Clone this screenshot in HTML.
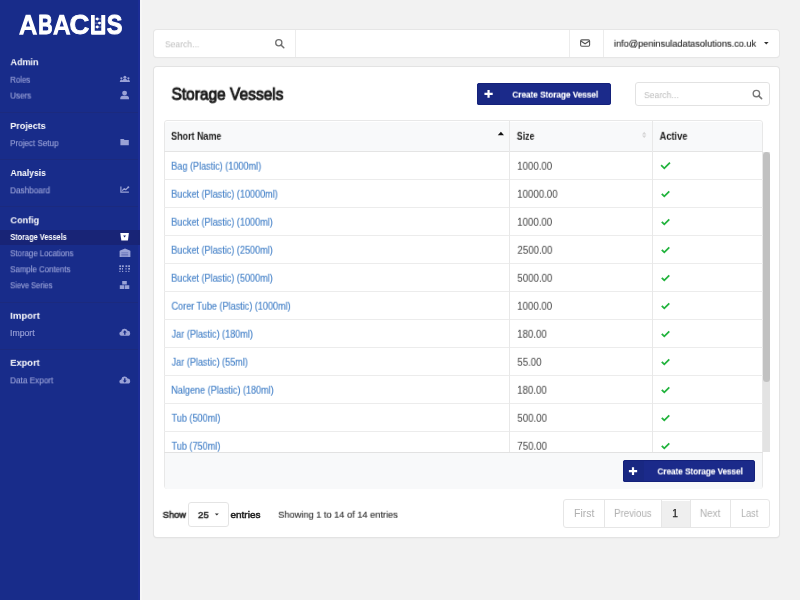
<!DOCTYPE html>
<html><head><meta charset="utf-8">
<style>
*{margin:0;padding:0;box-sizing:border-box}
html,body{width:800px;height:600px;overflow:hidden;background:#f2f2f2;font-family:"Liberation Sans",sans-serif}
.a{position:absolute}
.t{position:absolute;white-space:nowrap;line-height:1;transform-origin:0 0;will-change:transform;font-family:"Liberation Sans",sans-serif}
svg{position:absolute;overflow:visible}
</style></head><body>
<!-- sidebar -->
<div class="a" style="left:0;top:0;width:140px;height:600px;background:#182c8a"></div>
<div class="a" style="left:138px;top:0;width:2px;height:600px;background:#1c2d96"></div>
<div class="a" style="left:140px;top:0;width:2px;height:600px;background:#f6f6f6"></div>
<div class="a" style="left:0;top:112px;width:138px;height:1px;background:#1b2a7e"></div>
<div class="a" style="left:0;top:159px;width:138px;height:1px;background:#1b2a7e"></div>
<div class="a" style="left:0;top:206px;width:138px;height:1px;background:#1b2a7e"></div>
<div class="a" style="left:0;top:302px;width:138px;height:1px;background:#1b2a7e"></div>
<div class="a" style="left:0;top:349px;width:138px;height:1px;background:#1b2a7e"></div>
<div class="a" style="left:0;top:229.5px;width:140px;height:15.5px;background:#182476"></div>

<!-- logo -->
<svg width="140" height="50" style="left:0;top:0;will-change:transform" viewBox="0 0 140 50">
 <g font-family="Liberation Sans" font-weight="bold" font-size="100" fill="#fff" stroke="#fff" stroke-linejoin="round">
 <text transform="matrix(0.1984 0 0 0.2768 38.311 34.300)" stroke-width="3.79">B</text>
 <text transform="matrix(0.2746 0 0 0.2761 69.602 34.274)" stroke-width="3.27">C</text>
 <text transform="matrix(0.2350 0 0 0.2796 106.745 34.270)" stroke-width="3.50">S</text>
 </g>
 <path d="M19.00 34.75 L25.75 14.75 L30.50 14.75 L37.25 34.75 L33.05 34.75 L31.45 30.00 L24.80 30.00 L23.20 34.75 Z M25.98 26.50 L28.12 20.15 L30.27 26.50 Z M53.00 34.75 L59.47 14.75 L64.03 14.75 L70.50 34.75 L66.47 34.75 L64.94 30.00 L58.56 30.00 L57.03 34.75 Z M59.69 26.50 L61.75 20.15 L63.81 26.50 Z" fill="#fff" fill-rule="evenodd"/>
 <path d="M91 15 h3.75 v15.75 h6.5 v-15.75 h4 v18.75 q0 1 -1 1 h-12.25 q-1 0 -1 -1z" fill="#fff"/>
 <g stroke="#fff" stroke-width="0.6" opacity="0.7"><line x1="94.5" y1="19" x2="101.5" y2="19"/><line x1="94.5" y1="23.1" x2="101.5" y2="23.1"/><line x1="94.5" y1="27" x2="101.5" y2="27"/></g>
 <circle cx="97.25" cy="19" r="1.45" fill="#fff"/><circle cx="99.5" cy="23.1" r="1.45" fill="#fff"/><circle cx="97.25" cy="27" r="1.45" fill="#fff"/>
</svg>

<!-- sidebar icons -->
<svg width="140" height="400" style="left:0;top:0" viewBox="0 0 140 400">
 <g fill="#9aa2d6">
  <!-- roles -->
  <circle cx="124.9" cy="77.2" r="1.5"/><circle cx="121.4" cy="78.3" r="1.1"/><circle cx="128.4" cy="78.3" r="1.1"/>
  <path d="M119.7 82 q0.3-2.6 1.7-2.6 q1.4 0 1.7 2.6z M126.8 82 q0.3-2.6 1.6-2.6 q1.4 0 1.6 2.6z M122.3 82 q0.2-3.2 2.6-3.2 q2.4 0 2.6 3.2z"/>
  <!-- user -->
  <circle cx="124.6" cy="93.1" r="2.45"/>
  <path d="M120.3 99.2 v-0.9 q0-2.5 2.6-2.6 h3.4 q2.7 0.1 2.7 2.6 v0.9z"/>
  <!-- folder -->
  <path d="M120.4 139 h3.2 l1 1.1 h4.2 v5.1 h-8.4z"/>
  <!-- chart -->
  <path d="M120.3 186.4 h1.2 v5.2 h7.4 v1.2 h-8.6z"/>
  <path d="M122.2 190.6 l2-1.9 l1.6 0.9 l2.3-2.2" stroke="#9aa2d6" stroke-width="1.3" fill="none"/><circle cx="128.3" cy="187.3" r="1"/>
  <!-- warehouse -->
  <path d="M119.6 257 v-5.6 q0-0.6 0.6-0.9 l4.8-2 l4.8 2 q0.6 0.3 0.6 0.9 v5.6z"/>
  <!-- sample contents -->
  <rect x="119.3" y="265.3" width="1.8" height="1.8"/><rect x="122" y="265.3" width="1.8" height="1.8"/><rect x="125.5" y="265.3" width="1.8" height="1.8"/><rect x="128.2" y="265.3" width="1.8" height="1.8"/>
  <rect x="119.3" y="268" width="1.8" height="1.6"/><rect x="122" y="268" width="1" height="1.6"/><rect x="125.5" y="268" width="1" height="1.6"/><rect x="128.2" y="268" width="1.8" height="1.6"/>
  <rect x="119.3" y="270.8" width="1.2" height="1.2"/><rect x="122" y="270.8" width="1.2" height="1.2"/><rect x="125.5" y="270.8" width="1.2" height="1.2"/><rect x="128.2" y="270.8" width="1.2" height="1.2"/>
  <!-- sieve series (cubes) -->
  <path d="M122.2 281 h4.6 v3.4 h-4.6z M119.8 285.3 h4.5 v3.8 h-4.5z M124.9 285.3 h4.4 v3.8 h-4.4z"/>
  <!-- cloud upload -->
  <path d="M121.6 335.8 a2.1 2.1 0 0 1 -0.3-4.2 a3.3 3.3 0 0 1 6.3-0.8 a2.5 2.5 0 0 1 0.2 5z"/>
  <!-- cloud download -->
  <path d="M121.6 383.6 a2.1 2.1 0 0 1 -0.3-4.2 a3.3 3.3 0 0 1 6.3-0.8 a2.5 2.5 0 0 1 0.2 5z"/>
 </g>
 <path d="M124.8 330.3 l-2 2.2 h1.3 v2.3 h1.4 v-2.3 h1.3z" fill="#182c8a"/>
 <path d="M124.8 382.8 l-2 -2.2 h1.3 v-2.3 h1.4 v2.3 h1.3z" fill="#182c8a"/>
 <g fill="#1b2a8a" opacity="0.55"><rect x="121.3" y="252.6" width="6.9" height="0.6"/><rect x="121.3" y="254.1" width="6.9" height="0.6"/><rect x="121.3" y="255.6" width="6.9" height="0.6"/></g>
 <!-- bucket active -->
 <path d="M120.3 233.1 h8.6 l-1 7.5 h-6.6z" fill="#fff"/>
 <path d="M123.2 235.5 h2.8 l-1.4 2z" fill="#182476"/>
</svg>

<!-- top bar -->
<div class="a" style="left:153.5px;top:29.5px;width:625.5px;height:27.5px;background:#fff;border-radius:3px;box-shadow:0 0 0 1px #e6e6e6,0 1px 1px rgba(0,0,0,.08)"></div>
<div class="a" style="left:294.5px;top:29.5px;width:1px;height:27.5px;background:#ececec"></div>
<div class="a" style="left:568.5px;top:29.5px;width:1px;height:27.5px;background:#ececec"></div>
<div class="a" style="left:603px;top:29.5px;width:1px;height:27.5px;background:#ececec"></div>
<svg width="800" height="60" style="left:0;top:0">
 <circle cx="278.8" cy="42.7" r="3.1" fill="none" stroke="#707070" stroke-width="1.3"/>
 <line x1="281" y1="45" x2="283.8" y2="47.8" stroke="#707070" stroke-width="1.5" stroke-linecap="round"/>
 <rect x="580.6" y="39.9" width="9" height="6.4" rx="1.2" fill="none" stroke="#555" stroke-width="1.1"/>
 <path d="M580.8 41 l4.3 2.8 l4.3 -2.8" fill="none" stroke="#555" stroke-width="1.1"/>
 <path d="M764 42 h4.6 l-2.3 2.5z" fill="#333"/>
</svg>

<!-- card -->
<div class="a" style="left:153.5px;top:66.5px;width:625.5px;height:470px;background:#fff;border-radius:3px;box-shadow:0 0 0 1px #e3e3e3,0 1px 2px rgba(0,0,0,.08)"></div>
<!-- create button top -->
<div class="a" style="left:477px;top:82.5px;width:133.5px;height:22.3px;background:#1b2a8a;border-radius:2.5px;overflow:hidden"><div class="a" style="left:0;top:0;width:23px;height:22.3px;background:#192882"></div><div class="a" style="left:0;top:0;width:133.5px;height:22.3px;border:1px solid #14217a;border-radius:2.5px"></div></div>
<svg width="800" height="600" style="left:0;top:0">
 <path d="M487.45 90.1 h2.2 v2.7 h3.05 v2.2 h-3.05 v2.7 h-2.2 v-2.7 h-3.0 v-2.2 h3.0z" fill="#fff"/>
</svg>
<!-- search box -->
<div class="a" style="left:634.5px;top:82px;width:135px;height:23.5px;background:#fff;border:1px solid #e2e2e2;border-radius:3px"></div>
<svg width="800" height="600" style="left:0;top:0">
 <circle cx="756.4" cy="93.6" r="3.2" fill="none" stroke="#777" stroke-width="1.4"/>
 <line x1="758.7" y1="95.9" x2="761.6" y2="98.6" stroke="#777" stroke-width="1.6" stroke-linecap="round"/>
</svg>

<!-- table -->
<div class="a" style="left:163.5px;top:120.3px;width:599.5px;height:369.2px;background:#fff;border:1px solid #e8e8e8;border-radius:3px"></div>
<div class="a" style="left:164.5px;top:121.5px;width:597.5px;height:29.5px;background:#f8f9fa;border-radius:2px 2px 0 0"></div>
<div class="a" style="left:164px;top:150.5px;width:599px;height:1px;background:#e4e4e4"></div>
<div id="rows"></div>
<!-- row borders -->
<div class="a" style="left:164px;top:178.5px;width:599px;height:1px;background:#ececec"></div>
<div class="a" style="left:164px;top:206.5px;width:599px;height:1px;background:#ececec"></div>
<div class="a" style="left:164px;top:234.5px;width:599px;height:1px;background:#ececec"></div>
<div class="a" style="left:164px;top:262.5px;width:599px;height:1px;background:#ececec"></div>
<div class="a" style="left:164px;top:290.5px;width:599px;height:1px;background:#ececec"></div>
<div class="a" style="left:164px;top:318.5px;width:599px;height:1px;background:#ececec"></div>
<div class="a" style="left:164px;top:346.5px;width:599px;height:1px;background:#ececec"></div>
<div class="a" style="left:164px;top:374.5px;width:599px;height:1px;background:#ececec"></div>
<div class="a" style="left:164px;top:402.5px;width:599px;height:1px;background:#ececec"></div>
<div class="a" style="left:164px;top:430.5px;width:599px;height:1px;background:#ececec"></div>
<!-- col borders -->
<div class="a" style="left:509px;top:121px;width:1px;height:331px;background:#e8e8e8"></div>
<div class="a" style="left:652px;top:121px;width:1px;height:331px;background:#e8e8e8"></div>
<!-- table footer -->
<div class="a" style="left:164.5px;top:452px;width:597.5px;height:36.5px;background:#f8f9fa;border-radius:0 0 2px 2px"></div>
<div class="a" style="left:164px;top:451.5px;width:599px;height:1px;background:#e2e2e2"></div>
<!-- scrollbar -->
<div class="a" style="left:763px;top:151.5px;width:7px;height:300.5px;background:#e3e3e3"></div>
<div class="a" style="left:763px;top:152px;width:7px;height:230px;background:#c1c1c1;border-radius:3.5px"></div>
<!-- sort icons -->
<svg width="800" height="600" style="left:0;top:0">
 <path d="M497.8 135.3 h6.2 l-3.1 -3.5z" fill="#111"/>
 <path d="M642 134.6 h4.4 l-2.2 -2.8z M642 135.4 h4.4 l-2.2 2.7z" fill="#d6d6d6"/>
 <g fill="none" stroke="#22b33d" stroke-width="1.8" stroke-linecap="square">
  <path id="chk" d="M661.8 165.8 l2.5 2.5 l5 -5"/>
 </g>
 <g fill="none" stroke="#22b33d" stroke-width="1.8">
  <path d="M661.8 193.8 l2.5 2.5 l5 -5"/><path d="M661.8 221.8 l2.5 2.5 l5 -5"/><path d="M661.8 249.8 l2.5 2.5 l5 -5"/>
  <path d="M661.8 277.8 l2.5 2.5 l5 -5"/><path d="M661.8 305.8 l2.5 2.5 l5 -5"/><path d="M661.8 333.8 l2.5 2.5 l5 -5"/>
  <path d="M661.8 361.8 l2.5 2.5 l5 -5"/><path d="M661.8 389.8 l2.5 2.5 l5 -5"/><path d="M661.8 417.8 l2.5 2.5 l5 -5"/>
  <path d="M661.8 445.8 l2.5 2.5 l5 -5"/>
 </g>
</svg>
<!-- footer create button -->
<div class="a" style="left:622.7px;top:460.3px;width:132.8px;height:21.4px;background:#1b2a8a;border-radius:2.5px;overflow:hidden"><div class="a" style="left:0;top:0;width:21.7px;height:21.4px;background:#192882"></div><div class="a" style="left:0;top:0;width:132.8px;height:21.4px;border:1px solid #14217a;border-radius:2.5px"></div></div>
<svg width="800" height="600" style="left:0;top:0">
 <path d="M631.9 467.3 h2.2 v2.7 h3.05 v2.2 h-3.05 v2.7 h-2.2 v-2.7 h-3.0 v-2.2 h3.0z" fill="#fff"/>
</svg>

<!-- bottom -->
<div class="a" style="left:188px;top:502px;width:41px;height:25px;background:#fff;border:1px solid #e4e4e4;border-radius:3px"></div>
<svg width="800" height="600" style="left:0;top:0">
 <path d="M214.8 513.6 h4 l-2 2z" fill="#333"/>
</svg>
<div class="a" style="left:563px;top:499px;width:207px;height:28.5px;background:#fff;border:1px solid #e6e6e6;border-radius:3px"></div>
<div class="a" style="left:661px;top:500.5px;width:29px;height:26px;background:#efefef"></div>
<div class="a" style="left:604px;top:500px;width:1px;height:27px;background:#e6e6e6"></div>
<div class="a" style="left:661px;top:500px;width:1px;height:27px;background:#e6e6e6"></div>
<div class="a" style="left:689.5px;top:500px;width:1px;height:27px;background:#e6e6e6"></div>
<div class="a" style="left:730px;top:500px;width:1px;height:27px;background:#e6e6e6"></div>

<div class="t" style="left:10px;top:57px;font-size:9.9px;font-weight:bold;color:#ffffff;transform:translate(0.48px,0.20px) scaleX(0.9089);">Admin</div>
<div class="t" style="left:10px;top:120px;font-size:9.9px;font-weight:bold;color:#ffffff;transform:translate(0.30px,0.90px) scaleX(0.9055);">Projects</div>
<div class="t" style="left:10px;top:168px;font-size:9.9px;font-weight:bold;color:#ffffff;transform:translate(0.49px,0.00px) scaleX(0.8687);">Analysis</div>
<div class="t" style="left:10px;top:215px;font-size:9.9px;font-weight:bold;color:#ffffff;transform:translate(0.44px,0.30px) scaleX(0.9174);">Config</div>
<div class="t" style="left:10px;top:310px;font-size:9.9px;font-weight:bold;color:#ffffff;transform:translate(0.26px,0.80px) scaleX(0.9635);">Import</div>
<div class="t" style="left:10px;top:357px;font-size:9.9px;font-weight:bold;color:#ffffff;transform:translate(0.28px,0.80px) scaleX(0.9401);">Export</div>
<div class="t" style="left:10px;top:75px;font-size:8.3px;font-weight:normal;color:#98a0d6;transform:translate(0.15px,0.75px) scaleX(0.9489);-webkit-text-stroke:0.15px #98a0d6">Roles</div>
<div class="t" style="left:10px;top:91px;font-size:8.3px;font-weight:normal;color:#98a0d6;transform:translate(0.18px,0.55px) scaleX(0.9687);-webkit-text-stroke:0.15px #98a0d6">Users</div>
<div class="t" style="left:10px;top:139px;font-size:8.3px;font-weight:normal;color:#98a0d6;transform:translate(0.13px,0.15px) scaleX(0.9697);-webkit-text-stroke:0.15px #98a0d6">Project Setup</div>
<div class="t" style="left:10px;top:186px;font-size:8.3px;font-weight:normal;color:#98a0d6;transform:translate(0.12px,0.35px) scaleX(0.9819);-webkit-text-stroke:0.15px #98a0d6">Dashboard</div>
<div class="t" style="left:10px;top:249px;font-size:8.3px;font-weight:normal;color:#98a0d6;transform:translate(0.14px,0.30px) scaleX(0.9463);-webkit-text-stroke:0.15px #98a0d6">Storage Locations</div>
<div class="t" style="left:10px;top:265px;font-size:8.3px;font-weight:normal;color:#98a0d6;transform:translate(0.14px,0.30px) scaleX(0.9474);-webkit-text-stroke:0.15px #98a0d6">Sample Contents</div>
<div class="t" style="left:10px;top:281px;font-size:8.3px;font-weight:normal;color:#98a0d6;transform:translate(0.17px,0.30px) scaleX(0.9059);-webkit-text-stroke:0.15px #98a0d6">Sieve Series</div>
<div class="t" style="left:9px;top:329px;font-size:8.3px;font-weight:normal;color:#98a0d6;transform:translate(1.00px,0.05px) scaleX(1.0483);-webkit-text-stroke:0.15px #98a0d6">Import</div>
<div class="t" style="left:10px;top:376px;font-size:8.3px;font-weight:normal;color:#98a0d6;transform:translate(0.12px,0.35px) scaleX(0.9845);-webkit-text-stroke:0.15px #98a0d6">Data Export</div>
<div class="t" style="left:10px;top:233px;font-size:8.3px;font-weight:bold;color:#ffffff;transform:translate(0.32px,0.00px) scaleX(0.8868);">Storage Vessels</div>
<div class="t" style="left:164px;top:39px;font-size:9.5px;font-weight:normal;color:#bcbcbc;transform:translate(0.91px,0.28px) scaleX(0.9042);">Search...</div>
<div class="t" style="left:613px;top:38px;font-size:9.6px;font-weight:normal;color:#2a2a2a;transform:translate(0.88px,0.73px) scaleX(0.9583);-webkit-text-stroke:0.15px #2a2a2a">info@peninsuladatasolutions.co.uk</div>
<div class="t" style="left:171px;top:85px;font-size:16.5px;font-weight:normal;color:#1a1a1a;transform:translate(0.51px,0.70px) scaleX(0.9383);-webkit-text-stroke:0.95px #1a1a1a">Storage Vessels</div>
<div class="t" style="left:512px;top:89px;font-size:9.8px;font-weight:bold;color:#ffffff;transform:translate(0.39px,0.60px) scaleX(0.8332);-webkit-text-stroke:0.12px #fff">Create Storage Vessel</div>
<div class="t" style="left:643px;top:90px;font-size:9.5px;font-weight:normal;color:#bcbcbc;transform:translate(0.90px,0.08px) scaleX(0.9151);">Search...</div>
<div class="t" style="left:171px;top:131px;font-size:10px;font-weight:bold;color:#222;transform:translate(0.08px,0.80px) scaleX(0.8954);">Short Name</div>
<div class="t" style="left:516px;top:131px;font-size:10px;font-weight:bold;color:#222;transform:translate(0.79px,0.80px) scaleX(0.8763);">Size</div>
<div class="t" style="left:659px;top:131px;font-size:10px;font-weight:bold;color:#222;transform:translate(0.61px,0.80px) scaleX(0.9242);">Active</div>
<div class="t" style="left:171px;top:161px;font-size:10.2px;font-weight:normal;color:#4682c8;transform:translate(0.26px,0.69px) scaleX(0.8914);-webkit-text-stroke:0.15px #4682c8">Bag (Plastic) (1000ml)</div>
<div class="t" style="left:517px;top:161px;font-size:10.3px;font-weight:normal;color:#444444;transform:translate(0.11px,0.76px) scaleX(0.9408);">1000.00</div>
<div class="t" style="left:171px;top:189px;font-size:10.2px;font-weight:normal;color:#4682c8;transform:translate(0.26px,0.69px) scaleX(0.8914);-webkit-text-stroke:0.15px #4682c8">Bucket (Plastic) (10000ml)</div>
<div class="t" style="left:517px;top:189px;font-size:10.3px;font-weight:normal;color:#444444;transform:translate(0.11px,0.76px) scaleX(0.9408);">10000.00</div>
<div class="t" style="left:171px;top:217px;font-size:10.2px;font-weight:normal;color:#4682c8;transform:translate(0.26px,0.69px) scaleX(0.8914);-webkit-text-stroke:0.15px #4682c8">Bucket (Plastic) (1000ml)</div>
<div class="t" style="left:517px;top:217px;font-size:10.3px;font-weight:normal;color:#444444;transform:translate(0.11px,0.76px) scaleX(0.9408);">1000.00</div>
<div class="t" style="left:171px;top:245px;font-size:10.2px;font-weight:normal;color:#4682c8;transform:translate(0.26px,0.69px) scaleX(0.8914);-webkit-text-stroke:0.15px #4682c8">Bucket (Plastic) (2500ml)</div>
<div class="t" style="left:517px;top:245px;font-size:10.3px;font-weight:normal;color:#444444;transform:translate(0.39px,0.76px) scaleX(0.9408);">2500.00</div>
<div class="t" style="left:171px;top:273px;font-size:10.2px;font-weight:normal;color:#4682c8;transform:translate(0.26px,0.69px) scaleX(0.8914);-webkit-text-stroke:0.15px #4682c8">Bucket (Plastic) (5000ml)</div>
<div class="t" style="left:517px;top:273px;font-size:10.3px;font-weight:normal;color:#444444;transform:translate(0.32px,0.76px) scaleX(0.9408);">5000.00</div>
<div class="t" style="left:171px;top:301px;font-size:10.2px;font-weight:normal;color:#4682c8;transform:translate(0.50px,0.69px) scaleX(0.8914);-webkit-text-stroke:0.15px #4682c8">Corer Tube (Plastic) (1000ml)</div>
<div class="t" style="left:517px;top:301px;font-size:10.3px;font-weight:normal;color:#444444;transform:translate(0.11px,0.76px) scaleX(0.9408);">1000.00</div>
<div class="t" style="left:171px;top:329px;font-size:10.2px;font-weight:normal;color:#4682c8;transform:translate(0.64px,0.69px) scaleX(0.8914);-webkit-text-stroke:0.15px #4682c8">Jar (Plastic) (180ml)</div>
<div class="t" style="left:517px;top:329px;font-size:10.3px;font-weight:normal;color:#444444;transform:translate(0.11px,0.76px) scaleX(0.9408);">180.00</div>
<div class="t" style="left:171px;top:357px;font-size:10.2px;font-weight:normal;color:#4682c8;transform:translate(0.64px,0.69px) scaleX(0.8914);-webkit-text-stroke:0.15px #4682c8">Jar (Plastic) (55ml)</div>
<div class="t" style="left:517px;top:357px;font-size:10.3px;font-weight:normal;color:#444444;transform:translate(0.32px,0.76px) scaleX(0.9408);">55.00</div>
<div class="t" style="left:171px;top:385px;font-size:10.2px;font-weight:normal;color:#4682c8;transform:translate(0.26px,0.69px) scaleX(0.8914);-webkit-text-stroke:0.15px #4682c8">Nalgene (Plastic) (180ml)</div>
<div class="t" style="left:517px;top:385px;font-size:10.3px;font-weight:normal;color:#444444;transform:translate(0.11px,0.76px) scaleX(0.9408);">180.00</div>
<div class="t" style="left:171px;top:413px;font-size:10.2px;font-weight:normal;color:#4682c8;transform:translate(0.61px,0.69px) scaleX(0.8914);-webkit-text-stroke:0.15px #4682c8">Tub (500ml)</div>
<div class="t" style="left:517px;top:413px;font-size:10.3px;font-weight:normal;color:#444444;transform:translate(0.32px,0.76px) scaleX(0.9408);">500.00</div>
<div class="t" style="left:171px;top:441px;font-size:10.2px;font-weight:normal;color:#4682c8;transform:translate(0.61px,0.69px) scaleX(0.8914);-webkit-text-stroke:0.15px #4682c8">Tub (750ml)</div>
<div class="t" style="left:517px;top:441px;font-size:10.3px;font-weight:normal;color:#444444;transform:translate(0.29px,0.76px) scaleX(0.9408);">750.00</div>
<div class="t" style="left:657px;top:466px;font-size:9.8px;font-weight:bold;color:#ffffff;transform:translate(0.49px,0.40px) scaleX(0.8293);-webkit-text-stroke:0.12px #fff">Create Storage Vessel</div>
<div class="t" style="left:162px;top:509px;font-size:9.6px;font-weight:normal;color:#222;transform:translate(0.65px,0.83px) scaleX(0.9784);-webkit-text-stroke:0.5px #222">Show</div>
<div class="t" style="left:197px;top:510px;font-size:9.9px;font-weight:normal;color:#222;transform:translate(0.93px,0.09px) scaleX(0.9831);-webkit-text-stroke:0.45px #222">25</div>
<div class="t" style="left:230px;top:509px;font-size:9.6px;font-weight:normal;color:#222;transform:translate(0.52px,0.83px) scaleX(1.0385);-webkit-text-stroke:0.5px #222">entries</div>
<div class="t" style="left:278px;top:509px;font-size:9.8px;font-weight:normal;color:#333333;transform:translate(0.17px,0.69px) scaleX(0.9427);-webkit-text-stroke:0.15px #333">Showing 1 to 14 of 14 entries</div>
<div class="t" style="left:573px;top:508px;font-size:10.4px;font-weight:normal;color:#b0b0b0;transform:translate(0.99px,0.89px) scaleX(1.0123);">First</div>
<div class="t" style="left:614px;top:508px;font-size:10.4px;font-weight:normal;color:#b0b0b0;transform:translate(0.07px,0.89px) scaleX(0.9266);">Previous</div>
<div class="t" style="left:672px;top:508px;font-size:10.2px;font-weight:normal;color:#222;transform:translate(0.36px,0.79px) scaleX(1.0000);-webkit-text-stroke:0.25px #222">1</div>
<div class="t" style="left:699px;top:508px;font-size:10.4px;font-weight:normal;color:#b0b0b0;transform:translate(0.84px,0.89px) scaleX(0.9637);">Next</div>
<div class="t" style="left:741px;top:508px;font-size:10.4px;font-weight:normal;color:#b0b0b0;transform:translate(0.08px,0.89px) scaleX(0.8714);">Last</div>
</body></html>
